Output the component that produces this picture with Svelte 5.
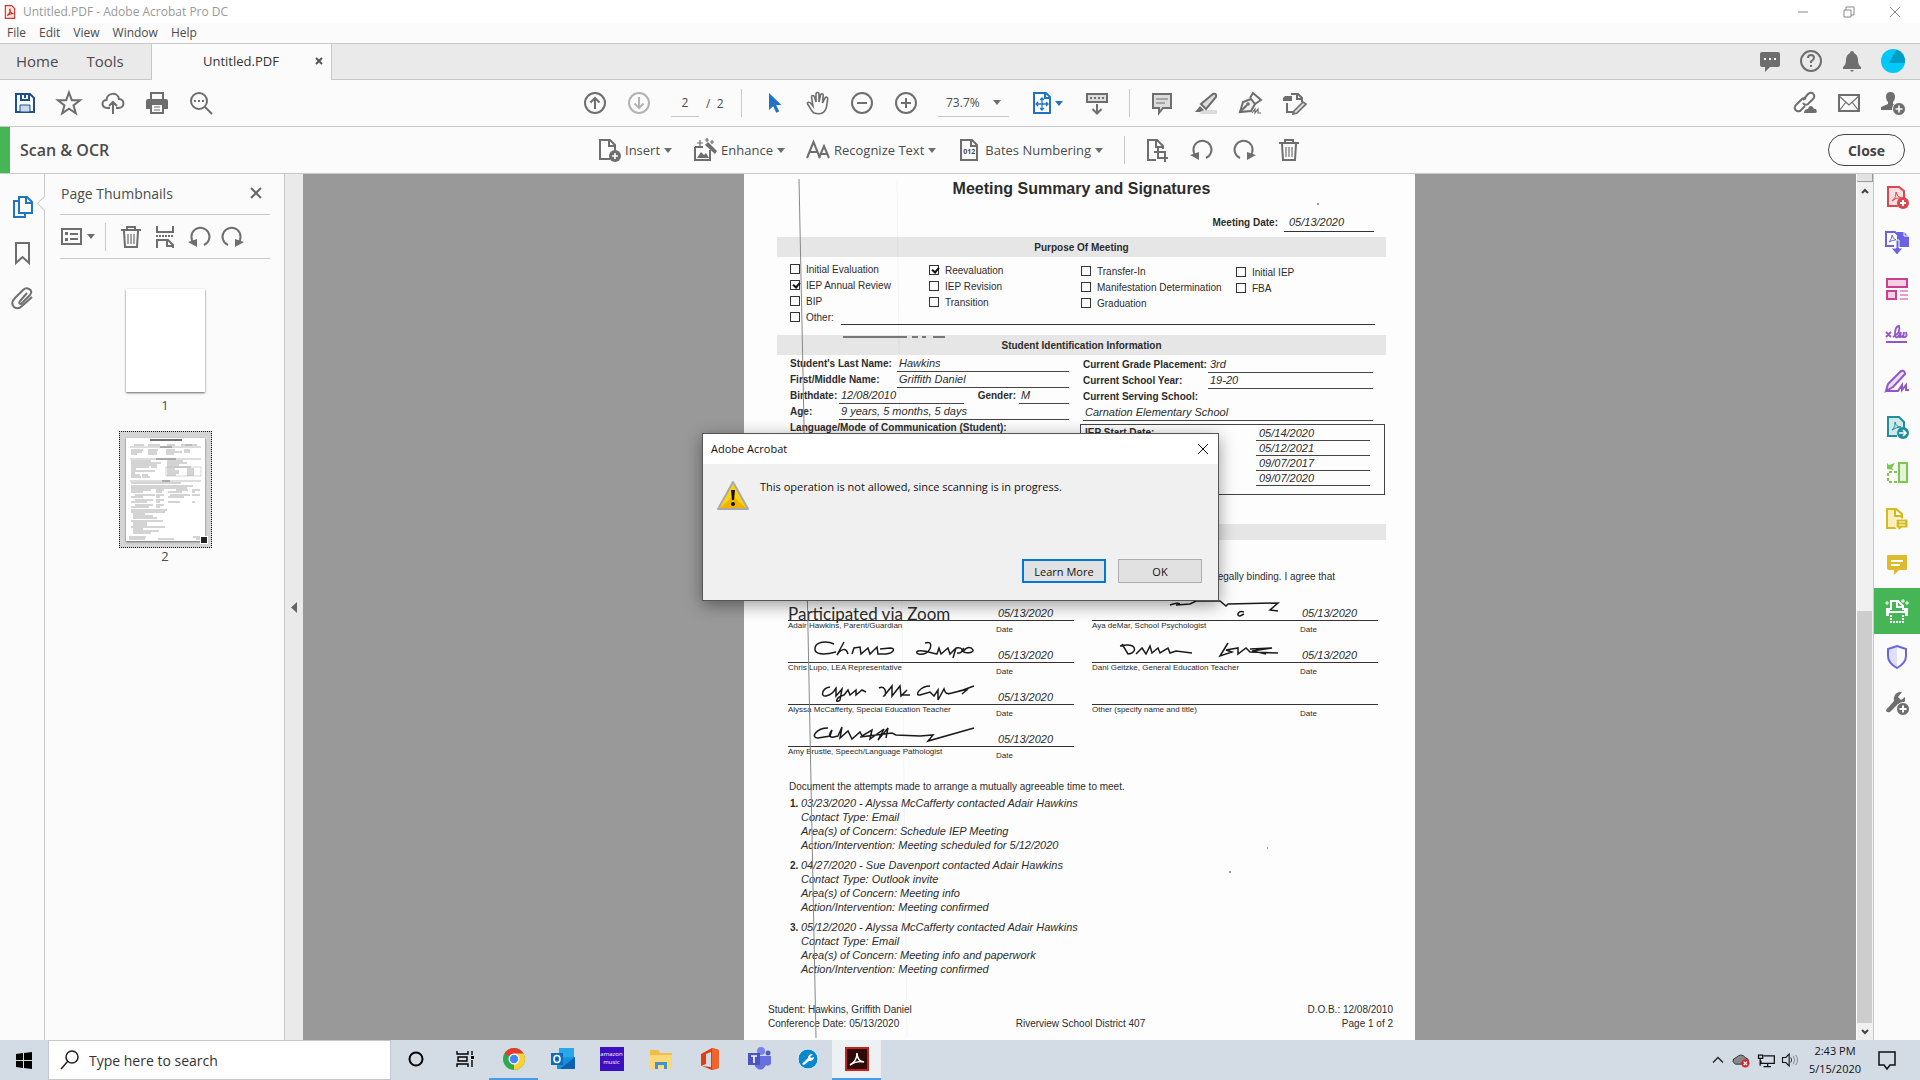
<script lang="ts">
    const icons: Record<string, string> = {
        pdf: '<path d="M4 1h11l5 5v17H4z" fill="#fbe9e7" stroke="#d0342c" stroke-width="2"/><path d="M7 18c4-2 6-8 5-11-2 1 1 8 6 8-4-1-8 1-11 3z" fill="none" stroke="#d0342c" stroke-width="2"/>',
        save: '<path d="M3 3h14l4 4v14H3z" fill="#fff" stroke="#1b4f8f" stroke-width="2"/><path d="M8 3v6h8V3" fill="none" stroke="#1b4f8f" stroke-width="2"/><path d="M12 4v3" stroke="#1b4f8f" stroke-width="2"/><path d="M7 21v-7h10v7z" fill="#c9d9ee" stroke="#1b4f8f"/>',
        star: '<path d="M12 1.500l2.800 7.700 8.200.1-6.500 5.100 2.300 7.900-6.800-4.600-6.800 4.600 2.300-7.900L1 9.300l8.200-.1z" class="ln"/>',
        cloud: '<path d="M9 17H6.500C-.5 16.500.5 9 5.500 9 6 1 17 1 18 8c6 0 6 9-.5 9H15M12 23V11M8 15l4-4 4 4" class="ln"/>',
        print: '<path d="M6 8V2h12v6" class="ln"/><path d="M3 8h18q2 0 2 2v8h-4v-4H5v4H1v-8q0-2 2-2z" class="fl"/><path d="M6 14v8h12v-8" class="ln"/><path d="M9 16h6M9 19h6" class="ln thin"/>',
        find: '<circle cx="10" cy="10" r="8" class="ln"/><path d="M16 16l7 7" class="ln"/><path d="M5 9h2v2H5zM9 9h2v2H9zM13 9h2v2h-2z" class="fl"/>',
        up: '<circle cx="12" cy="12" r="10" class="ln"/><path d="M12 18V7M7.500 11.500L12 7l4.500 4.500" class="ln"/>',
        down: '<g opacity=".5"><circle cx="12" cy="12" r="10" class="ln"/><path d="M12 6v11M7.500 12.500L12 17l4.500-4.500" class="ln"/></g>',
        pointer: '<path d="M7 2l12.500 12h-5.300l3 6.500-3 1.300-3-6.600L7 19z" fill="#2073c8"/>',
        hand: '<path d="M8 22C5 20 4 16 1.500 13c-.5-2 2-2.500 3.500-.5L7 15 5.500 6c0-2 2.500-2 3 0L10 11V3c0-2 3-2 3 0v8l1.500-7c.5-2 3-1.500 2.700.5L16.500 12l2.500-5c1-1.500 3-.7 2.700 1-.7 4-.7 7-1.700 9.500C18.500 22 15 24 8 22z" class="ln medium"/>',
        minus: '<circle cx="12" cy="12" r="10" class="ln"/><path d="M7 12h10" class="ln"/>',
        plus: '<circle cx="12" cy="12" r="10" class="ln"/><path d="M7 12h10M12 7v10" class="ln"/>',
        fit: '<path d="M4 2h12l4 4v16H4z" fill="#fff" stroke="#2073c8" stroke-width="2"/><path d="M15 2v5h5" fill="none" stroke="#2073c8" stroke-width="2"/><path d="M12 7v12M6 13h12M10 9l2-2 2 2M10 17l2 2 2-2M8 11l-2 2 2 2M16 11l2 2-2 2" fill="none" stroke="#2073c8" stroke-width="1.300"/>',
        keyboard: '<path d="M2 3h20v8H2z" fill="#ddd" stroke="#6e6e6e" stroke-width="2"/><path d="M5 7h2M9 7h2M13 7h2M17 7h2" class="ln"/><path d="M12 13v9M7.500 18l4.500 4.500 4.500-4.500" class="ln"/>',
        comment: '<path d="M3 3h18v14h-8l-4 5v-5H3z" fill="#dcdcdc" stroke="#6e6e6e" stroke-width="2"/><path d="M6 8h12M6 12h9" class="ln thin"/>',
        marker: '<path d="M9 19h14v4H5z" fill="#dcdcdc"/><path d="M7 13L19 3q4-1 3 3L12 18z" fill="#dcdcdc" stroke="#6e6e6e" stroke-width="2"/><path d="M6 15l4 4-4 2H1z" class="fl"/>',
        pen: '<path d="M2 21l3-10 8-3 4 5-4 7z" fill="#eee" stroke="#6e6e6e" stroke-width="2"/><path d="M2 21l7-7M12 7l3-5 8 7-6 4" class="ln"/><circle cx="10" cy="13" r="1.800" class="fl"/><path d="M14 22l3-4v4l3-4v4h3" class="ln thin"/>',
        stamp: '<path d="M9 3h7l4 4v4M5 12v9h7M15 3v5h5" class="ln"/><path d="M1 7l2-2h7v5H1z" class="fl"/><path d="M12 20l9-9 3 2-9 9-4 1z" fill="#ddd" stroke="#6e6e6e" stroke-width="1.600"/>',
        link: '<path d="M10 9l5-6q4-3 6 1 1 2-1 4l-5 5q-3 2-5-1M13 8q-3-2-5 1l-5 5q-3 4 1 6 3 1 4-1l4-4" class="ln"/><path d="M11 22q0-4 4-4 1-5 5-2 0 2 3 2 2 4-1 4z" class="fl"/>',
        mail: '<path d="M2 4h20v16H2z" class="ln"/><path d="M2 5l10 9L22 5M2 20l7-9M22 20l-7-9" class="ln thin"/>',
        person: '<path d="M5 6q0-5 4.500-5T14 6q0 3-2 5v2l4 2v4H0v-3l7-3v-2Q5 9 5 6z" class="fl"/><circle cx="18" cy="18" r="6.500" fill="#6e6e6e" stroke="#fbfbfb"/><path d="M14.500 18h7M18 14.500v7" stroke="#fff" stroke-width="1.600"/>',
        chat: '<path d="M4 3h16q2 0 2 2v11q0 2-2 2h-8l-5 5v-5H4q-2 0-2-2V5q0-2 2-2z" class="fl"/><path d="M6 9h2v2H6zM11 9h2v2h-2zM16 9h2v2h-2z" fill="#fff"/>',
        help: '<circle cx="12" cy="12" r="10" class="ln"/><path d="M9 9q0-3 3-3t3 3q0 1.500-3 3.500V14M12 16v2" class="ln"/>',
        bell: '<path d="M12 2q2 0 2 2 4 2 4 7 0 5 3 7v2H3v-2q3-2 3-7 0-5 4-7 0-2 2-2z" class="fl"/><path d="M10 21h4l-2 2z" class="fl"/>',
        avatar: '<circle cx="12" cy="12" r="12" fill="#00c8f8"/><path d="M8 14L15.500.5A12 12 0 0 1 24 14z" fill="#009ec4"/>',
        insert: '<path d="M13 21H3V2h10l5 5v5M12 2v6h6" class="ln"/><circle cx="18" cy="18" r="6" class="fl"/><path d="M15 18h6M18 15v6" stroke="#fff" stroke-width="1.600"/>',
        enhance: '<path d="M2 9v13h15V12M2 9h8" class="ln"/><path d="M4 20l4-6 3 3 2-2 3 5z" class="fl"/><path d="M12 7l3-3 9 9-2 3z" class="fl"/><path d="M7 2v6M4 5h6M14 0v4M12 2h4M19 2v4M17 4h4" class="ln thin"/>',
        text: '<path d="M1 20L7.500 4 14 20M3.500 14h8M13 20l5-12 5 12M15 16h6" class="ln"/>',
        bates: '<path d="M4 2h11l5 5v15H4zM14 2v6h6" class="ln"/>',
        crop: '<path d="M11 22H3V2h9l6 6v3M11 2v7h6M9 14h11v10M13 10v10h10" class="ln"/>',
        ccw: '<path d="M7 18A9 9 0 1 1 17 20" class="ln"/><path d="M1 17l9-3v8z" class="fl"/>',
        cw: '<path d="M17 18A9 9 0 1 0 7 20" class="ln"/><path d="M23 17l-9-3v8z" class="fl"/>',
        trash: '<path d="M2 5h20M8 5V2h8v3M5 6l1 16h12l1-16" class="ln"/><path d="M9 9v10M12 9v10M15 9v10" class="ln thin"/>',
        options: '<path d="M2 4h19v15H2z" class="ln"/><path d="M5 7h3v3H5zM5 13h3v3H5z" class="fl"/><path d="M10 9h8M10 14h8" class="ln"/>',
        split: '<path d="M4 1v6h16V1M4 23v-8h11l5 5v3M14 15v6h6" class="ln"/><path d="M3 11h18" class="ln" stroke-dasharray="2 1"/>',
        pages: '<path d="M7 6H3v16h11v-4" fill="none" stroke="#1f74c4" stroke-width="2"/><path d="M8 2h8l5 5v11H8zM15 2v6h6" fill="#fff" stroke="#1f74c4" stroke-width="2"/>',
        bookmark: '<path d="M5 2h13v20l-6.500-6L5 22z" class="ln"/>',
        clip: '<path d="M16 6l-7 8q-2 3 1 3l9-9q3-4-1-6-3-2-6 1l-8 8q-5 5-1 9 4 3 8-1l10-9" class="ln"/>',
        create: '<path d="M13 21H3V2h11l5 4v8" fill="#fbdfe0" stroke="#d9474f" stroke-width="2"/><path d="M7 16q5-4 4-9 1 5 5 6-5-1-9 3z" fill="none" stroke="#d9474f"/><circle cx="18" cy="18" r="6" fill="#d9474f"/><path d="M15 18h6M18 15v6" stroke="#fff" stroke-width="2"/>',
        exportpdf: '<path d="M9 15H1V1h9l3 3" fill="#fff" stroke="#6a62e0" stroke-width="2"/><path d="M12 1h7l5 5v10H12z" fill="#6a62e0"/><path d="M19 0v5h5" fill="none" stroke="#fff"/><path d="M4 11q3-3 3-7 1 4 4 5-4 0-7 2z" fill="none" stroke="#6a62e0"/><path d="M11 9h3v8h4l-6 7-6-7h5z" fill="#6a62e0" stroke="#fff"/>',
        organize: '<path d="M2 2h20v8H2zM2 14h9v8H2z" fill="#f6cfe4" stroke="#c9408f" stroke-width="2"/><path d="M15 14h8M15 18h8M15 22h8" stroke="#c9408f"/>',
        sign: '<path d="M1 9l5 5M6 9l-5 5M8 14q8-4 6-11-4 0-4 9 0 3 3 2l3-5-1 5q4 0 4-5l-1 5q5 1 3-5M1 19h21" fill="none" stroke="#9256cc" stroke-width="1.800"/>',
        fill: '<path d="M1 22l2-7L16 2q4-1 4 3L8 18z" fill="#eadff5" stroke="#9256cc" stroke-width="2"/><path d="M1 22h12l4-6v5l4-5v5h3" fill="none" stroke="#9256cc" stroke-width="2"/>',
        share: '<path d="M12 21H3V2h11l5 5v7" fill="#cfe8ea" stroke="#238d98" stroke-width="2"/><path d="M7 15q4-3 3-8 1 5 6 5-5 0-9 3z" fill="none" stroke="#238d98"/><circle cx="18" cy="18" r="6" fill="#238d98"/><path d="M14 18h7M18 15l3 3-3 3" fill="none" stroke="#fff" stroke-width="1.600"/>',
        compare: '<path d="M14 2h8v19h-8z" fill="#e2f5d8" stroke="#7cc84f" stroke-width="2"/><path d="M12 11H3v10h9" fill="none" stroke="#7cc84f" stroke-width="2" stroke-dasharray="3 2"/><path d="M2 8V2l2 2 6-2-3 5 2 2z" fill="#7cc84f"/>',
        request: '<path d="M11 21H2V2h9l6 5v6M10 2v7h7" fill="#f7eebc" stroke="#d6b91e" stroke-width="2"/><path d="M11 12h12v9h-6l-4 3v-3h-2z" fill="#d6b91e" stroke="#fff"/><path d="M14 15h6M14 18h6" stroke="#fff"/>',
        note: '<path d="M4 2h17q1 0 1 1v13q0 1-1 1h-7l-5 5v-5H4q-2 0-2-2V3q0-1 2-1z" fill="#dcbc2c"/><path d="M6 8h12M6 12h9" stroke="#fff" stroke-width="2"/>',
        scan: '<path d="M6 11V2h7l5 5v4M12 2v6h6" fill="none" stroke="#fff" stroke-width="2"/><path d="M1 9h4v3h14V9h4v8h-3v-3H4v3H1z" fill="#fff"/><path d="M6 16v7h12v-7" fill="none" stroke="#fff" stroke-width="2" stroke-dasharray="2 1"/><path d="M2 2v4M0 4h4M18 0v4M16 2h4M22 2v4M20 4h4" stroke="#fff"/>',
        shield: '<path d="M12 1v22Q3 18 3 11V4z" fill="#e0dff8"/><path d="M12 1l9 3v7q0 7-9 12Q3 18 3 11V4z" fill="none" stroke="#6a67d8" stroke-width="2"/>',
        wrench: '<path d="M1 19L9 10Q8 3 14 1h3l-4 5 3 3 4-3q1 6-4 7l-3 0-8 8q-4 1-4-2z" class="fl"/><circle cx="18" cy="18" r="6.500" fill="#6e6e6e" stroke="#fff"/><path d="M14.500 18h7M18 14.500v7" stroke="#fff" stroke-width="2"/>',
        windows: '<path d="M4 6l7-1v7H4zM12 5l8-1v8h-8zM4 13h7v7l-7-1zM12 13h8v8l-8-1z" fill="#000"/>',
        search: '<circle cx="15" cy="9" r="6" fill="none" stroke="#222" stroke-width="1.500"/><path d="M11 13l-7 8" stroke="#222" stroke-width="1.500"/>',
        cortana: '<circle cx="12" cy="12" r="6.500" fill="none" stroke="#000" stroke-width="2"/>',
        taskview: '<path d="M4 4v3h11V4M4 20v-3h11v3M5 10h9v4H5zM19 4v4M19 13v7" fill="none" stroke="#000" stroke-width="1.400"/><path d="M18 9h3v3h-3z"/>',
        chrome: '<circle cx="12" cy="12" r="11" fill="#2da94f"/><path d="M12 12L2.500 6.500A11 11 0 0 1 21.500 6.500z" fill="#e33b2e"/><path d="M12 12V6.500h9.500A11 11 0 0 1 12 23z" fill="#fdd131"/><circle cx="12" cy="12" r="5.500" fill="#fff"/><circle cx="12" cy="12" r="4.200" fill="#4285f4"/>',
        outlook: '<path d="M8 1h15v12H8z" fill="#28a8ea"/><path d="M6 11l18-1v12H6z" fill="#1490df"/><path d="M24 10v12H9z" fill="#0f5fb0"/><path d="M0 6h12v12H0z" fill="#0f6cbd"/><ellipse cx="6" cy="12" rx="3" ry="3.500" fill="none" stroke="#fff" stroke-width="1.600"/>',
        explorer: '<path d="M1 3h8l2 3h12v16H1z" fill="#f2bd45"/><path d="M1 8h22v14H1z" fill="#fdd878"/><path d="M6 22v-7h12v7h-3v-4H9v4z" fill="#3d93d6"/>',
        office: '<path d="M3 7l11-6 7 2v18l-7 2-10-4 9 1V5L8 7v10l-5 2z" fill="#e23c10"/><path d="M14 1l7 2v18l-7 2z" fill="#f0642c"/>',
        teams: '<circle cx="14" cy="4" r="4" fill="#7b83eb"/><circle cx="21" cy="6" r="2.500" fill="#5059c9"/><path d="M8 9h16v8q-3 3-5 1-3 6-8 4-4-2-3-5z" fill="#6970d9"/><path d="M1 6h12v12H1z" fill="#4b53bc"/><path d="M4 9h6M7 9v7" stroke="#fff" stroke-width="1.600"/>',
        tool: '<circle cx="12" cy="12" r="10" fill="#0a87c9" stroke="#d8eefa"/><path d="M6 17l6-6q0-4 5-4l-3 3 1 1 3-1q0 4-5 4l-5 4z" fill="#fff"/>',
        acrobat: '<path d="M1 1h22v22H1z" fill="#2d0b0b" stroke="#c4221c" stroke-width="2"/><path d="M5 18q7-4 7-12 0 8 7 9-7-2-14 3z" fill="none" stroke="#fff" stroke-width="1.500"/>',
        chevron: '<path d="M6 15l6-6 6 6" fill="none" stroke="#222" stroke-width="1.500"/>',
        onedrive: '<path d="M1 14q0-4 4-5 6-6 11 0 4 1 4 5l-2 3H4z" fill="#888" stroke="#222"/><circle cx="16" cy="16" r="5" fill="#d4272e"/><path d="M14 14l4 4M18 14l-4 4" stroke="#fff" stroke-width="1.500"/>',
        network: '<path d="M9 7h13v9H6v-3M9 20h9M14 16v4M3 6h5v4H3zM5 10v9" fill="none" stroke="#111" stroke-width="1.500"/>',
        sound: '<path d="M3 9h4l4-4v14l-4-4H3z" fill="none" stroke="#111" stroke-width="1.300"/><path d="M13 9q2 3 0 6" fill="none" stroke="#111"/><path d="M16 7q3 5 0 10M19 6q4 6 0 12" fill="none" stroke="#777"/>',
        notice: '<path d="M4 4h16v13h-5l-3 4-3-4H4z" fill="none" stroke="#111" stroke-width="1.500"/>',
        warning: '<path d="M16 2L31 29H1z" fill="#fbd311" stroke="#a9a9a9" stroke-width="2" stroke-linejoin="round"/><path d="M16 16l13 12H3z" fill="#f0b400"/><path d="M14 10h4l-1 10h-2z" fill="#111"/><circle cx="16" cy="24" r="2" fill="#111"/>',
    };

    const menus = ['File', 'Edit', 'View', 'Window', 'Help'];
    const fileTools = ['save', 'star', 'cloud', 'print', 'find'];
    const railTools = ['create', 'exportpdf', 'organize', 'sign', 'fill', 'share', 'compare', 'request', 'note', 'scan', 'shield', 'wrench'];
    const scanMenus = [
        { icon: 'insert', label: 'Insert' },
        { icon: 'enhance', label: 'Enhance' },
        { icon: 'text', label: 'Recognize Text' },
        { icon: 'bates', label: 'Bates Numbering' },
    ];
    const purposes = [
        [['Initial Evaluation', false], ['IEP Annual Review', true], ['BIP', false]],
        [['Reevaluation', true], ['IEP Revision', false], ['Transition', false]],
        [['Transfer-In', false], ['Manifestation Determination', false], ['Graduation', false]],
        [['Initial IEP', false], ['FBA', false]],
    ] as [string, boolean][][];
    const iepDates = [
        ['IEP Start Date:', '05/14/2020'],
        ['', '05/12/2021'],
        ['', '09/07/2017'],
        ['', '09/07/2020'],
    ];
    const signers = [
        { name: 'Adair Hawkins, Parent/Guardian', date: '05/13/2020', note: 'Participated via Zoom', ink: '' },
        {
            name: 'Aya deMar, School Psychologist',
            date: '05/13/2020',
            ink: 'M78 13C88 9 90 13 84 13L98 12L104 9L128 9L134 14L136 12L186 11L178 18L186 19M152 20C146 18 144 24 148 24L152 22',
        },
        {
            name: 'Chris Lupo, LEA Representative',
            date: '05/13/2020',
            ink: 'M46 10C38 6 28 8 27 14C26 21 36 21 48 18M56 8L49 21C53 15 58 13 60 20M64 20L66 14L72 13L73 20L80 14L82 20L89 13L90 20L98 20C106 19 108 14 102 14L92 15M137 9C146 6 143 16 138 19C132 22 126 19 130 17C138 16 146 20 149 20L151 14L153 20L160 14L162 20L168 14L165 24M168 14C176 12 176 20 169 19M176 14C170 20 186 20 185 16C183 12 178 13 176 17',
        },
        {
            name: 'Dani Geitzke, General Education Teacher',
            date: '05/13/2020',
            ink: 'M30 10L36 20C44 20 46 10 34 11L28 12M44 20L50 14L54 20L58 12L60 19L66 14L68 19L76 14L78 19L84 17L100 19M136 9L128 22L140 18L134 16L146 14L146 20L154 14L158 18L186 19M158 15L180 14L160 17L174 20',
        },
        {
            name: 'Alyssa McCafferty, Special Education Teacher',
            date: '05/13/2020',
            ink: 'M42 11C34 12 32 21 38 20C46 18 47 13 48 12L48 20L54 13L52 24C48 28 46 22 56 19L60 14L62 19L68 14L68 19L74 14L78 16M91 12C98 8 99 20 96 20L104 10L104 20L112 10L113 20L119 14L114 19L122 19M142 10C132 10 126 20 132 19L142 16L146 20L150 14L150 24L156 13C158 20 160 18 175 14L186 10M160 18L180 13L174 18',
        },
        { name: 'Other (specify name and title)', date: '', ink: '' },
        {
            name: 'Amy Brustle, Speech/Language Pathologist',
            date: '05/13/2020',
            ink: 'M40 10C28 10 22 20 30 20L42 18L44 12C38 20 44 20 50 18L54 9L52 20L60 13L64 21L72 14L74 18L84 12L82 21L96 11L90 22L100 10L98 20M72 19L104 15L108 17L132 18L145 17L140 23L186 10',
        },
    ];
    const attempts = [
        ['03/23/2020 - Alyssa McCafferty contacted Adair Hawkins', 'Contact Type: Email', 'Area(s) of Concern: Schedule IEP Meeting', 'Action/Intervention: Meeting scheduled for 5/12/2020'],
        ['04/27/2020 - Sue Davenport contacted Adair Hawkins', 'Contact Type: Outlook invite', 'Area(s) of Concern: Meeting info', 'Action/Intervention: Meeting confirmed'],
        ['05/12/2020 - Alyssa McCafferty contacted Adair Hawkins', 'Contact Type: Email', 'Area(s) of Concern: Meeting info and paperwork', 'Action/Intervention: Meeting confirmed'],
    ];
    // rows of the small page preview: y, then x/width pairs
    const preview = [
        [7, 55, 16], [7, 8, 10, 22, 12, 41, 8, 59, 7], [12, 5, 12, 22, 10, 40, 9, 58, 6], [14, 5, 11, 22, 9, 40, 16, 58, 6], [16, 5, 6, 22, 9, 40, 8],
        [23, 5, 14, 19, 6, 41, 16], [25, 5, 30, 41, 20], [27, 5, 26, 41, 12], [29, 5, 18, 25, 6, 41, 24], [31, 5, 5, 41, 8, 61, 7], [33, 5, 24, 41, 12, 61, 7],
        [35, 5, 4, 41, 12, 61, 7], [37, 5, 9, 16, 6, 41, 9, 61, 7], [39, 5, 10, 16, 8],
        [45, 5, 50], [48, 5, 62], [50, 5, 56], [52, 5, 20, 30, 8, 50, 12, 66, 8], [54, 5, 12, 30, 6, 42, 14, 66, 3],
        [57, 9, 20, 30, 8, 44, 20, 66, 8], [59, 5, 12, 30, 4, 42, 16], [62, 9, 18, 30, 8], [64, 5, 16, 30, 4, 42, 12, 66, 3], [67, 9, 18, 30, 8], [69, 5, 18, 30, 4],
        [72, 5, 36], [74, 5, 34], [76, 7, 12], [78, 7, 20], [80, 7, 24], [83, 5, 32], [85, 7, 14], [87, 7, 14], [89, 5, 34], [91, 7, 10], [93, 7, 26], [95, 7, 18],
        [99, 3, 17, 67, 8], [101, 3, 16, 32, 16, 70, 5],
    ];
    const taskApps = ['cortana', 'taskview', 'chrome', 'outlook', 'amazon', 'explorer', 'office', 'teams', 'tool', 'acrobat'];

    let pageNumber = '2';
    let query = '';
    let dialogOpen = true;

    function closeDialog() {
        dialogOpen = false;
    }

    function previewPath(row: number[]) {
        let d = '';
        for (let i = 1; i < row.length; i += 2) {
            d += `M${row[i]} ${row[0]}h${row[i + 1]}`;
        }
        return d;
    }
</script>

{#snippet icon(name: string)}
    <svg class="icon" viewBox="0 0 24 24" aria-hidden="true">{@html icons[name]}</svg>
{/snippet}

{#snippet caret()}
    <svg class="caret" viewBox="0 0 8 5" aria-hidden="true"><path d="M0 0h8L4 5z" /></svg>
{/snippet}

<div class="app">
    <header class="titlebar">
        <svg class="app-icon" viewBox="0 0 24 24" aria-hidden="true">{@html icons.pdf}</svg>
        <span>Untitled.PDF - Adobe Acrobat Pro DC</span>
        <div class="window-buttons">
            <button aria-label="Minimize"><svg viewBox="0 0 12 12"><path d="M1 6h10" /></svg></button>
            <button aria-label="Restore"><svg viewBox="0 0 12 12"><path d="M1 4h7v7H1zM3 4V1h8v8H8" /></svg></button>
            <button aria-label="Close window"><svg viewBox="0 0 12 12"><path d="M1 1l10 10M11 1L1 11" /></svg></button>
        </div>
    </header>

    <nav class="menubar">
        {#each menus as menu}
            <button>{menu}</button>
        {/each}
    </nav>

    <div class="tabs">
        <div class="fixed-tabs">
            <button>Home</button>
            <button>Tools</button>
        </div>
        <div class="active-tab">
            <span>Untitled.PDF</span>
            <button aria-label="Close tab"><svg viewBox="0 0 8 8"><path d="M1 1l6 6M7 1L1 7" /></svg></button>
        </div>
        <div class="tab-actions">
            {#each ['chat', 'help', 'bell', 'avatar'] as name}
                <button aria-label={name}>{@render icon(name)}</button>
            {/each}
        </div>
    </div>

    <div class="toolbar">
        {#each fileTools as name}
            <button class="tool" aria-label={name}>{@render icon(name)}</button>
        {/each}
        <div class="page-tools">
            <button class="tool" aria-label="Previous page">{@render icon('up')}</button>
            <button class="tool" aria-label="Next page">{@render icon('down')}</button>
            <input class="page-input" aria-label="Page number" bind:value={pageNumber} />
            <span class="page-count">/&nbsp; 2</span>
            <i class="sep"></i>
            {#each ['pointer', 'hand', 'minus', 'plus'] as name}
                <button class="tool" aria-label={name}>{@render icon(name)}</button>
            {/each}
            <label class="zoom">
                <select aria-label="Zoom level"><option>73.7%</option></select>
                {@render caret()}
            </label>
            <button class="fit" aria-label="Fit page">{@render icon('fit')}{@render caret()}</button>
            <button class="tool" aria-label="Read mode">{@render icon('keyboard')}</button>
            <i class="sep"></i>
            {#each ['comment', 'marker', 'pen', 'stamp'] as name}
                <button class="tool" aria-label={name}>{@render icon(name)}</button>
            {/each}
        </div>
        <div class="share-tools">
            {#each ['link', 'mail', 'person'] as name}
                <button class="tool" aria-label={name}>{@render icon(name)}</button>
            {/each}
        </div>
    </div>

    <div class="scanbar">
        <h1>Scan &amp; OCR</h1>
        <div class="scan-tools">
            {#each scanMenus as item}
                <button class="scan-menu">
                    <span class="scan-icon">
                        {@render icon(item.icon)}
                        {#if item.icon === 'bates'}<small>012</small>{/if}
                    </span>
                    <span>{item.label}</span>
                    {@render caret()}
                </button>
            {/each}
            <i class="sep"></i>
            {#each ['crop', 'ccw', 'cw', 'trash'] as name}
                <button class="tool" aria-label={name}>{@render icon(name)}</button>
            {/each}
        </div>
        <button class="close-tool">Close</button>
    </div>

    <main>
        <nav class="side-rail">
            <button class="current" aria-label="Page thumbnails">{@render icon('pages')}</button>
            <button aria-label="Bookmarks">{@render icon('bookmark')}</button>
            <button aria-label="Attachments">{@render icon('clip')}</button>
        </nav>

        <aside class="thumbs">
            <div class="thumbs-head">
                <h2>Page Thumbnails</h2>
                <button aria-label="Close panel"><svg viewBox="0 0 12 12"><path d="M1 1l10 10M11 1L1 11" /></svg></button>
            </div>
            <div class="thumbs-tools">
                <button class="options" aria-label="Options">{@render icon('options')}{@render caret()}</button>
                <i class="sep"></i>
                {#each ['trash', 'split', 'ccw', 'cw'] as name}
                    <button aria-label={name}>{@render icon(name)}</button>
                {/each}
            </div>
            <button class="thumb" aria-label="Page 1"><span class="mini"></span></button>
            <span class="thumb-label">1</span>
            <button class="thumb selected" aria-label="Page 2">
                <span class="mini">
                    <svg viewBox="0 0 79 103">
                        <path d="M24 2h32" stroke="#444" stroke-width="1.5" />
                        <path d="M4 9h71M4 21h71M4 43h71" stroke="#ddd" stroke-width="2" />
                        <path d="M34 9h12M30 21h20M36 43h8" stroke="#777" />
                        <path d="M40 29h35v9H40z" fill="none" stroke="#aaa" stroke-width=".5" />
                        {#each preview as row}
                            <path d={previewPath(row)} stroke="#a8a8a8" />
                        {/each}
                    </svg>
                </span>
                <i class="corner"></i>
            </button>
            <span class="thumb-label second">2</span>
        </aside>

        <button class="splitter" aria-label="Collapse panel"><svg viewBox="0 0 6 11"><path d="M6 0v11L0 5.500z" /></svg></button>

        <section class="viewer">
            <article class="sheet">
                <svg class="scan-marks" viewBox="0 0 671 866" aria-hidden="true">
                    <path d="M55 5L59 200L72 864" stroke="#888" />
                    <path d="M153 5L163 864" stroke="#000" stroke-opacity=".04" />
                    <path d="M99 163h102" stroke="#777" stroke-width="2" stroke-dasharray="64 5 6 4 4 7" />
                    <path d="M485 698h2M523 674h1M573 30h2" stroke="#999" stroke-width="2" />
                </svg>
                <h2>Meeting Summary and Signatures</h2>
                <div class="meeting-date"><b>Meeting Date:</b><em>05/13/2020</em></div>
                <h3>Purpose Of Meeting</h3>
                <div class="purposes">
                    {#each purposes as column}
                        <div class="purpose-col">
                            {#each column as [label, checked]}
                                <label class="check"><input type="checkbox" {checked} />{label}</label>
                            {/each}
                        </div>
                    {/each}
                </div>
                <div class="other"><label class="check"><input type="checkbox" />Other:</label><i></i></div>
                <h3>Student Identification Information</h3>

                <div class="student">
                    <div class="student-left">
                        <div class="field"><b class="wide">Student's Last Name:</b><em>Hawkins</em></div>
                        <div class="field"><b class="wide">First/Middle Name:</b><em>Griffith Daniel</em></div>
                        <div class="field birth">
                            <b>Birthdate:</b><em>12/08/2010</em><b class="gender">Gender:</b><em>M</em>
                        </div>
                        <div class="field"><b>Age:</b><em>9 years, 5 months, 5 days</em></div>
                        <div class="field"><b>Language/Mode of Communication (Student):</b></div>
                    </div>
                    <div class="student-right">
                        <div class="field"><b class="grade">Current Grade Placement:</b><em>3rd</em></div>
                        <div class="field"><b class="grade">Current School Year:</b><em>19-20</em></div>
                        <div class="field"><b>Current Serving School:</b></div>
                        <div class="field"><em>Carnation Elementary School</em></div>
                        <div class="iep">
                            {#each iepDates as [label, value]}
                                <div><b>{label}</b><em>{value}</em></div>
                            {/each}
                        </div>
                    </div>
                </div>

                <h3 class="sign-head"></h3>
                <p class="binding">is legally binding. I agree that</p>

                <div class="signatures">
                    {#each signers as signer}
                        <div class="signer">
                            <div class="sign-line">
                                {#if signer.note}
                                    <span class="hand">{signer.note}</span>
                                {:else}
                                    <svg viewBox="0 0 200 28" aria-hidden="true"><path d={signer.ink} /></svg>
                                {/if}
                                <em>{signer.date}</em>
                            </div>
                            <div class="sign-caption"><span>{signer.name}</span><span class="date">Date</span></div>
                        </div>
                    {/each}
                </div>

                <p class="attempts-head">Document the attempts made to arrange a mutually agreeable time to meet.</p>
                <ol>
                    {#each attempts as lines}
                        <li>
                            {#each lines as line}
                                <div>{line}</div>
                            {/each}
                        </li>
                    {/each}
                </ol>

                <footer>
                    <div>Student: Hawkins, Griffith Daniel<br />Conference Date: 05/13/2020</div>
                    <div class="district">Riverview School District 407</div>
                    <div class="page-no">D.O.B.: 12/08/2010<br />Page 1 of 2</div>
                </footer>
            </article>
        </section>

        <div class="scrollbar">
            <i class="split-box"></i>
            <button aria-label="Scroll up"><svg viewBox="0 0 8 6"><path d="M1 5l3-3 3 3" /></svg></button>
            <div class="track"><i></i></div>
            <button aria-label="Scroll down"><svg viewBox="0 0 8 6"><path d="M1 1l3 3 3-3" /></svg></button>
        </div>

        <nav class="tool-rail">
            {#each railTools as name}
                <button class:active={name === 'scan'} aria-label={name}>{@render icon(name)}</button>
            {/each}
        </nav>
    </main>

    <footer class="taskbar">
        <button class="start" aria-label="Start">{@render icon('windows')}</button>
        <label class="search">
            {@render icon('search')}
            <input placeholder="Type here to search" aria-label="Search" bind:value={query} />
        </label>
        {#each taskApps as name}
            <button class="task" class:running={name === 'chrome'} class:front={name === 'acrobat'} aria-label={name}>
                {#if name === 'amazon'}
                    <span class="amazon">amazon<br />music</span>
                {:else}
                    {@render icon(name)}
                {/if}
            </button>
        {/each}
        <div class="tray">
            {#each ['chevron', 'onedrive', 'network', 'sound'] as name}
                <button class="tray-button" aria-label={name}>{@render icon(name)}</button>
            {/each}
            <div class="clock">2:43 PM<br />5/15/2020</div>
            <button class="notice" aria-label="Notifications">{@render icon('notice')}</button>
        </div>
    </footer>

    {#if dialogOpen}
        <div class="dialog" role="alertdialog" aria-labelledby="dialog-title">
            <div class="dialog-title">
                <span id="dialog-title">Adobe Acrobat</span>
                <button aria-label="Close dialog" on:click={closeDialog}><svg viewBox="0 0 12 12"><path d="M1 1l10 10M11 1L1 11" /></svg></button>
            </div>
            <div class="dialog-body">
                <svg viewBox="0 0 32 30" aria-hidden="true">{@html icons.warning}</svg>
                <p>This operation is not allowed, since scanning is in progress.</p>
            </div>
            <div class="dialog-buttons">
                <button class="default">Learn More</button>
                <button on:click={closeDialog}>OK</button>
            </div>
        </div>
    {/if}
</div>

<style>
    :global(body) {
        margin: 0;
        overflow: hidden;
    }

    .app {
        position: relative;
        display: flex;
        flex-direction: column;
        height: 100vh;
        background: #fbfbfb;
        color: #4b4b4b;
        font-family: 'Open Sans', 'Noto Sans', sans-serif;
        font-size: 13px;
    }

    .app *,
    .app {
        box-sizing: border-box;
    }

    button,
    input,
    select {
        padding: 0;
        border: 0;
        background: none;
        color: inherit;
        font: inherit;
        outline: none;
    }

    button {
        display: flex;
        align-items: center;
        justify-content: center;
    }

    h1,
    h2,
    h3,
    p,
    ol {
        margin: 0;
        padding: 0;
    }

    .icon {
        width: 24px;
        height: 24px;
        flex: none;
        overflow: visible;
    }

    .icon :global(.ln) {
        fill: none;
        stroke: #6e6e6e;
        stroke-width: 2;
    }

    .icon :global(.medium) {
        stroke-width: 1.6;
    }

    .icon :global(.thin) {
        stroke-width: 1.2;
    }

    .icon :global(.fl) {
        fill: #6e6e6e;
    }

    .caret {
        width: 8px;
        height: 5px;
        flex: none;
        fill: #6e6e6e;
    }

    .sep {
        width: 1px;
        height: 28px;
        background: #c8c8c8;
    }

    .tool {
        width: 44px;
        height: 44px;
        flex: none;
    }

    /* window chrome */
    .titlebar {
        display: flex;
        align-items: center;
        height: 23px;
        padding-left: 3px;
        background: #fff;
        color: #999;
        font-size: 12px;
    }

    .app-icon {
        width: 14px;
        height: 16px;
        margin-right: 6px;
    }

    .window-buttons {
        display: flex;
        margin-left: auto;
        padding-right: 2px;
    }

    .window-buttons button {
        width: 46px;
        height: 20px;
    }

    .window-buttons svg {
        width: 12px;
        height: 12px;
        fill: none;
        stroke: #888;
    }

    .menubar {
        display: flex;
        gap: 13px;
        height: 20px;
        padding: 0 0 2px 7px;
        font-size: 12px;
    }

    .tabs {
        display: flex;
        height: 37px;
        border-top: 1px solid #c8c8c8;
        background: #eaeaea;
        font-size: 14px;
    }

    .fixed-tabs {
        display: flex;
        gap: 28px;
        width: 152px;
        padding: 0 0 2px 16px;
        border-right: 1px solid #c8c8c8;
        border-bottom: 1px solid #c8c8c8;
        font-size: 15px;
    }

    .active-tab {
        display: flex;
        align-items: center;
        width: 180px;
        padding: 0 0 2px 51px;
        border-right: 1px solid #c8c8c8;
        background: #fbfbfb;
        color: #333;
        font-size: 13px;
    }

    .active-tab button {
        margin-left: auto;
        margin-right: 8px;
    }

    .active-tab svg {
        width: 8px;
        height: 8px;
        fill: none;
        stroke: #555;
        stroke-width: 2;
    }

    .tab-actions {
        display: flex;
        flex: 1;
        justify-content: flex-end;
        gap: 17px;
        padding: 0 15px 2px 0;
        border-bottom: 1px solid #c8c8c8;
    }

    .toolbar,
    .scanbar {
        display: flex;
        align-items: center;
        height: 47px;
        border-bottom: 1px solid #c8c8c8;
    }

    .toolbar {
        padding-left: 3px;
    }

    .page-tools {
        display: flex;
        align-items: center;
        margin-left: 350px;
    }

    .page-input {
        width: 28px;
        height: 27px;
        margin-left: 10px;
        border-bottom: 1px solid #c8c8c8;
        text-align: center;
        font-size: 12px;
    }

    .page-count {
        width: 35px;
        margin-left: 7px;
        font-size: 12px;
    }

    .page-tools .sep {
        margin-right: 10px;
    }

    .zoom {
        display: flex;
        align-items: center;
        width: 71px;
        height: 27px;
        margin-left: 10px;
        padding: 0 8px;
        border-bottom: 1px solid #c8c8c8;
    }

    .zoom select {
        flex: 1;
        appearance: none;
        font-size: 12px;
    }

    .fit {
        gap: 1px;
        width: 34px;
        margin-left: 20px;
        margin-right: 12px;
    }

    .fit .caret {
        fill: #2073c8;
    }

    .page-tools .sep:nth-of-type(2) {
        margin-left: 10px;
    }

    .share-tools {
        display: flex;
        margin-left: auto;
        padding-right: 5px;
    }

    .scanbar h1 {
        display: flex;
        align-items: center;
        width: 597px;
        height: 46px;
        padding-left: 10px;
        border-left: 10px solid #45b556;
        font-size: 16px;
        font-weight: 600;
    }

    .scan-tools {
        display: flex;
        align-items: center;
    }

    .scan-menu {
        gap: 4px;
        margin-right: 21px;
        font-size: 13px;
    }

    .scan-icon {
        position: relative;
        display: flex;
    }

    .scan-icon small {
        position: absolute;
        left: 6px;
        top: 9px;
        font-size: 7px;
        font-weight: 700;
        line-height: 10px;
    }

    .scan-tools .sep {
        margin-right: 10px;
    }

    .close-tool {
        width: 77px;
        height: 32px;
        margin-left: auto;
        margin-right: 15px;
        border: 1px solid #444;
        border-radius: 16px;
        color: #444;
        font-size: 14px;
        font-weight: 700;
    }

    main {
        display: flex;
        flex: 1;
        min-height: 0;
    }

    .side-rail {
        width: 45px;
        padding-top: 10px;
        border-right: 1px solid #c8c8c8;
    }

    .side-rail button {
        position: relative;
        width: 44px;
        height: 46px;
        padding-left: 2px;
    }

    .side-rail .current::after {
        content: '';
        position: absolute;
        right: -6px;
        top: 14px;
        width: 10px;
        height: 10px;
        border-left: 1px solid #c8c8c8;
        border-bottom: 1px solid #c8c8c8;
        background: #fbfbfb;
        transform: rotate(45deg);
    }

    .thumbs {
        display: flex;
        flex-direction: column;
        align-items: center;
        width: 240px;
        padding: 0 14px 0 15px;
        border-right: 1px solid #c8c8c8;
    }

    .thumbs-head {
        display: flex;
        align-items: center;
        justify-content: space-between;
        align-self: stretch;
        height: 41px;
        padding: 0 8px 2px 1px;
        border-bottom: 1px solid #c8c8c8;
    }

    .thumbs-head h2 {
        font-size: 14px;
        font-weight: 400;
    }

    .thumbs-head svg {
        width: 12px;
        height: 12px;
        stroke: #666;
        stroke-width: 2;
    }

    .thumbs-tools {
        display: flex;
        align-items: center;
        align-self: stretch;
        gap: 10px;
        height: 44px;
        margin-bottom: 30px;
        border-bottom: 1px solid #c8c8c8;
    }

    .options {
        gap: 3px;
    }

    .thumbs-tools .sep {
        margin-right: 3px;
    }

    .thumb {
        position: relative;
        width: 79px;
        height: 103px;
    }

    .thumb.selected {
        width: 93px;
        height: 117px;
        border: 1px dotted #111;
        background: #d5d5d5;
    }

    .mini {
        width: 79px;
        height: 103px;
        flex: none;
        background: #fff;
        box-shadow: 0 1px 2px #666;
    }

    .mini svg {
        display: block;
    }

    .corner {
        position: absolute;
        right: 3px;
        bottom: 3px;
        width: 8px;
        height: 8px;
        border: 1px solid #fff;
        background: #222;
    }

    .thumb-label {
        height: 39px;
        padding-top: 3px;
        line-height: 20px;
    }

    .thumb-label.second {
        padding-top: 0;
        line-height: 16px;
    }

    .splitter {
        width: 18px;
        background: #eaeaea;
    }

    .splitter svg {
        width: 6px;
        height: 11px;
        fill: #666;
    }

    .viewer {
        flex: 1;
        min-width: 0;
        overflow: hidden;
        background: #999;
    }

    /* scanned page */
    .sheet {
        position: relative;
        width: 671px;
        min-height: 100%;
        margin: 0 auto;
        background: #fdfdfd;
        color: #2c2c2c;
        font-family: 'Liberation Sans', Arial, sans-serif;
        font-size: 10px;
    }

    .scan-marks {
        position: absolute;
        inset: 0;
        width: 671px;
        height: 866px;
        fill: none;
    }

    .sheet h2 {
        padding-left: 4px;
        line-height: 30px;
        text-align: center;
        font-size: 16px;
    }

    .sheet em {
        font-size: 11px;
    }

    .meeting-date {
        display: flex;
        align-items: center;
        justify-content: flex-end;
        gap: 6px;
        height: 33px;
        padding: 9px 41px 5px 0;
    }

    .meeting-date em {
        width: 90px;
        padding-left: 5px;
        border-bottom: 1px solid #333;
        line-height: 17px;
    }

    .sheet h3 {
        height: 20px;
        margin: 0 29px 0 33px;
        background: #e6e6e6;
        line-height: 21px;
        text-align: center;
        font-size: 10px;
    }

    .purposes {
        display: grid;
        grid-template-columns: 139px 152px 155px 1fr;
        height: 48px;
        margin: 4px 40px 0 46px;
    }

    .purpose-col:nth-child(2) {
        padding-top: 1px;
    }

    .purpose-col:nth-child(3) {
        padding-top: 2px;
    }

    .purpose-col:nth-child(4) {
        padding-top: 3px;
    }

    .check {
        display: flex;
        align-items: center;
        gap: 6px;
        height: 16px;
    }

    .check input {
        position: relative;
        width: 10px;
        height: 10px;
        margin: 0;
        appearance: none;
        border: 1px solid #333;
    }

    .check input:checked::after {
        content: '';
        position: absolute;
        left: 2px;
        top: 1px;
        width: 5px;
        height: 3px;
        border-left: 2px solid #111;
        border-bottom: 2px solid #111;
        transform: rotate(-50deg);
    }

    .other {
        display: flex;
        gap: 7px;
        margin: 0 40px 10px 46px;
    }

    .other i {
        flex: 1;
        border-bottom: 1px solid #333;
    }

    .student {
        display: flex;
        padding: 1px 30px 0 46px;
    }

    .student-left {
        width: 279px;
        margin-right: 11px;
    }

    .student-right {
        flex: 1;
        padding-top: 1px;
    }

    .field {
        display: flex;
        height: 16px;
        line-height: 16px;
        white-space: nowrap;
    }

    .student-right .field {
        margin: 0 12px 0 3px;
    }

    .field b {
        min-width: 49px;
    }

    .field .wide {
        width: 107px;
    }

    .field .grade {
        width: 125px;
    }

    .field em {
        flex: 1;
        padding-left: 2px;
        border-bottom: 1px solid #444;
        line-height: 15px;
    }

    .birth em:last-child {
        flex: none;
        width: 50px;
    }

    .field .gender {
        padding: 0 3px 0 14px;
    }

    .iep {
        height: 71px;
        margin-top: 3px;
        padding: 1px 14px 0 4px;
        border: 1px solid #444;
    }

    .iep div {
        display: flex;
        justify-content: space-between;
        height: 15px;
        line-height: 14px;
    }

    .iep em {
        width: 114px;
        padding-left: 3px;
        border-bottom: 1px solid #444;
    }

    .sheet .sign-head {
        height: 16px;
        margin-top: 29px;
    }

    .binding {
        height: 52px;
        padding: 29px 80px 0 0;
        text-align: right;
        line-height: 16px;
    }

    .signatures {
        display: grid;
        grid-template-columns: 286px 286px;
        gap: 0 18px;
        margin-left: 44px;
    }

    .signer {
        height: 42px;
    }

    .sign-line {
        display: flex;
        align-items: flex-end;
        height: 29px;
        border-bottom: 1px solid #333;
        line-height: 13px;
    }

    .sign-line svg {
        width: 200px;
        height: 28px;
        overflow: visible;
        fill: none;
        stroke: #1a1a1a;
        stroke-width: 1.5;
    }

    .sign-line em {
        margin-left: 10px;
    }

    .hand {
        width: 200px;
        font-family: Lato, sans-serif;
        font-size: 17px;
        line-height: 13px;
        white-space: nowrap;
    }

    .sign-caption {
        display: flex;
        font-size: 8px;
        line-height: 9px;
    }

    .sign-caption span:first-child {
        width: 208px;
    }

    .sign-caption .date {
        padding-top: 4px;
    }

    .attempts-head {
        padding: 20px 0 2px 45px;
        line-height: 14px;
    }

    ol {
        padding-left: 57px;
        font-size: 11px;
        font-style: italic;
        line-height: 14px;
    }

    li {
        margin-bottom: 6px;
    }

    li::marker {
        font-size: 10px;
        font-style: normal;
        font-weight: 700;
    }

    .sheet footer {
        display: grid;
        grid-template-columns: 1fr auto 1fr;
        padding: 21px 22px 8px 24px;
        line-height: 14px;
    }

    .district {
        align-self: flex-end;
    }

    .page-no {
        text-align: right;
    }

    .scrollbar {
        display: flex;
        flex-direction: column;
        width: 18px;
        border-left: 1px solid #fff;
        border-right: 1px solid #c8c8c8;
        background: #f0f0f0;
    }

    .split-box {
        height: 8px;
        border-right: 1px solid #999;
        border-bottom: 1px solid #999;
        background: #e2e2e2;
    }

    .scrollbar button {
        height: 17px;
    }

    .scrollbar svg {
        width: 8px;
        height: 6px;
        fill: none;
        stroke: #444;
        stroke-width: 2;
    }

    .track {
        display: flex;
        flex: 1;
        align-items: flex-end;
    }

    .track i {
        width: 15px;
        height: 50%;
        background: #cdcdcd;
    }

    .tool-rail {
        width: 46px;
    }

    .tool-rail button {
        width: 46px;
        height: 46px;
    }

    .tool-rail .active {
        background: #45b556;
    }

    /* windows taskbar */
    .taskbar {
        display: flex;
        height: 40px;
        background: #d3dbe4;
        color: #111;
    }

    .start {
        width: 48px;
    }

    .search {
        display: flex;
        align-items: center;
        gap: 8px;
        width: 343px;
        padding-left: 8px;
        border: 1px solid #c4c8cc;
        background: #fff;
    }

    .search input {
        flex: 1;
        min-width: 0;
        font-size: 14px;
    }

    .search input::placeholder {
        color: #333;
    }

    .task {
        width: 49px;
        border-bottom: 2px solid transparent;
    }

    .task.running {
        border-color: #4a9ae8;
    }

    .task.front {
        border-color: #4a9ae8;
        background: #eef1f4;
    }

    .amazon {
        width: 24px;
        height: 24px;
        padding-top: 3px;
        background: #3c0fc0;
        color: #fff;
        font-size: 6px;
        line-height: 8px;
    }

    .tray {
        display: flex;
        align-items: center;
        margin-left: auto;
        padding-right: 21px;
    }

    .tray-button {
        width: 24px;
    }

    .tray-button .icon {
        width: 20px;
        height: 20px;
    }

    .clock {
        width: 56px;
        margin-left: 5px;
        font-size: 11px;
        line-height: 18px;
        text-align: center;
    }

    .notice {
        margin-left: 12px;
    }

    /* message box */
    .dialog {
        position: absolute;
        left: calc(50% - 258px);
        top: calc(50% - 107px);
        width: 517px;
        height: 168px;
        border: 1px solid #555;
        background: #f0f0f0;
        box-shadow: 0 4px 16px rgba(0, 0, 0, 0.4);
        color: #111;
        font-size: 11px;
    }

    .dialog-title {
        display: flex;
        align-items: center;
        justify-content: space-between;
        height: 30px;
        padding: 0 9px 1px 8px;
        background: #fff;
    }

    .dialog-title svg {
        width: 12px;
        height: 12px;
        stroke: #111;
    }

    .dialog-body {
        display: flex;
        gap: 11px;
        height: 95px;
        padding: 15px 14px 0;
    }

    .dialog-body svg {
        width: 32px;
        height: 30px;
        margin-top: 1px;
    }

    .dialog-buttons {
        display: flex;
        justify-content: flex-end;
        gap: 12px;
        padding-right: 16px;
    }

    .dialog-buttons button {
        width: 84px;
        height: 24px;
        border: 1px solid #adadad;
        background: #e1e1e1;
    }

    .dialog-buttons .default {
        border: 2px solid #0078d7;
    }
</style>
